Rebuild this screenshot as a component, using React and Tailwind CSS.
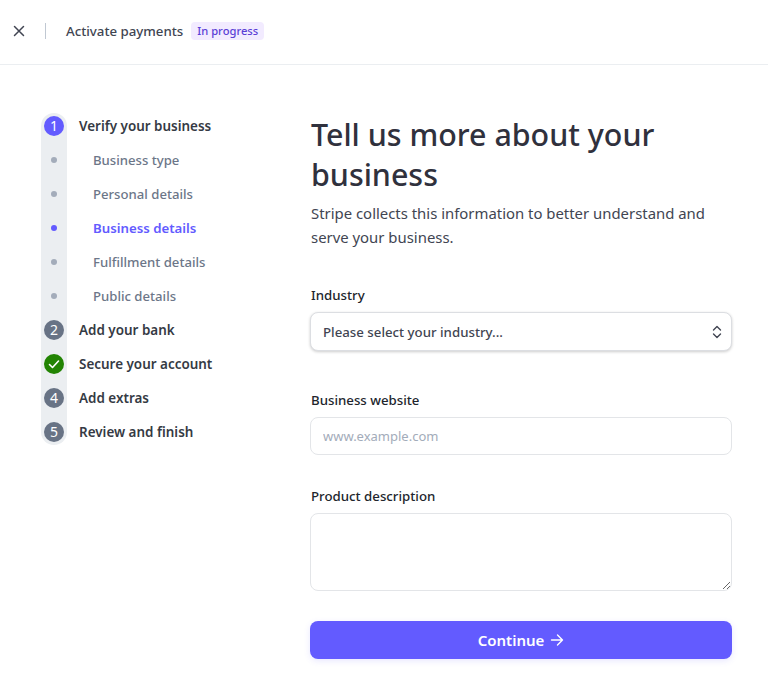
import React from "react";

const Num = ({ children, bg = "bg-[#687385]" }) => (
  <div className={`w-5 h-5 rounded-full ${bg} text-white flex items-center justify-center text-[14px] leading-none`}>{children}</div>
);
const Dot = ({ active }) => <div className={`w-[6px] h-[6px] rounded-full ${active ? "bg-[#635bff]" : "bg-[#a3acba]"}`} />;

const Cell = ({ children }) => <div className="h-[26px] flex items-center justify-center">{children}</div>;

const Check = () => (
  <div className="w-5 h-5 rounded-full bg-[#228403] flex items-center justify-center">
    <svg width="12" height="12" viewBox="0 0 12 12" fill="none" stroke="white" strokeWidth="1.6" strokeLinecap="round" strokeLinejoin="round"><path d="M1.5 6.5 4.5 9.5 10.5 3" /></svg>
  </div>
);

const steps = [
  ["Verify your business", "main"],
  ["Business type", "sub"],
  ["Personal details", "sub"],
  ["Business details", "active"],
  ["Fulfillment details", "sub"],
  ["Public details", "sub"],
  ["Add your bank", "main"],
  ["Secure your account", "main"],
  ["Add extras", "main"],
  ["Review and finish", "main"],
];

const labelClass = {
  main: "text-[#353a44] font-semibold text-[13.45px]",
  sub: "text-[#6c7688] font-medium text-[13.15px] pl-[14px] pt-[2px]",
  active: "text-[#635bff] font-semibold text-[13.25px] pl-[14px] pt-[2px]",
};

const Label = ({ children }) => <div className="text-[13.25px] leading-5 font-medium text-[#21252c]">{children}</div>;

export default function App() {
  return (
    <div className="min-h-[694px] bg-white font-['Noto_Sans','Open_Sans',sans-serif]">
      <header className="h-[65px] border-b border-[#ebeef1] flex items-center pl-[13px] pb-[2px]">
        <svg width="12" height="12" viewBox="0 0 12 12" fill="none" stroke="#414552" strokeWidth="1.5" strokeLinecap="round"><path d="M1.5 1.5 10.5 10.5M10.5 1.5 1.5 10.5" /></svg>
        <div className="w-px h-4 bg-[#c0c8d2] ml-[20px]" />
        <div className="ml-[20px] text-[13.25px] leading-5 font-medium text-[#414552]">Activate payments</div>
        <div className="ml-2 h-[18px] px-[6px] rounded-[4px] bg-[#f2ebff] text-[#5b3fd6] text-[11.2px] leading-[18px] font-medium">In progress</div>
      </header>
      <main className="flex pt-12 pl-[41px] pr-[36px]">
        <div className="w-[269px] shrink-0 flex gap-3">
          <div className="w-[26px] h-[332px] rounded-[13px] bg-[#ebeef1] flex flex-col gap-2">
            <Cell><Num bg="bg-[#635bff]">1</Num></Cell>
            <Cell><Dot /></Cell>
            <Cell><Dot /></Cell>
            <Cell><Dot active /></Cell>
            <Cell><Dot /></Cell>
            <Cell><Dot /></Cell>
            <Cell><Num>2</Num></Cell>
            <Cell><Check /></Cell>
            <Cell><Num>4</Num></Cell>
            <Cell><Num>5</Num></Cell>
          </div>
          <div className="flex flex-col gap-2">
            {steps.map(([t, k]) => (
              <div key={t} className={`h-[26px] flex items-center whitespace-nowrap ${labelClass[k]}`}>{t}</div>
            ))}
          </div>
        </div>
        <div className="flex-1 min-w-0 pt-[2px]">
          <h1 className="pl-px text-[30.4px] leading-10 font-medium text-[#30313d]">Tell us more about your business</h1>
          <p className="pl-px mt-[6px] text-[14.9px] leading-6 text-[#414552]">Stripe collects this information to better understand and serve your business.</p>
          <div className="mt-[36px] pl-px"><Label>Industry</Label></div>
          <div className="mt-[7px] h-[39px] rounded-[8px] bg-white border border-[#dcdee2] shadow-[0_1px_3px_rgba(0,0,0,0.2)] flex items-center justify-between pl-3 pr-[9px] text-[13.25px] font-medium text-[#414552]">
            <span className="pt-[2px]">Please select your industry...</span>
            <svg width="10" height="14" viewBox="0 0 10 14" fill="none" stroke="#414552" strokeWidth="1.4" strokeLinecap="round" strokeLinejoin="round"><path d="M1.5 5 5 1.5 8.5 5M1.5 9 5 12.5 8.5 9" /></svg>
          </div>
          <div className="mt-[39px] pl-px"><Label>Business website</Label></div>
          <input readOnly placeholder="www.example.com" className="mt-[7px] block w-full h-[38px] rounded-[8px] border border-[#e3e5e8] px-3 text-[13px] outline-none placeholder:text-[#a3acba]" />
          <div className="mt-[31px] pl-px"><Label>Product description</Label></div>
          <textarea readOnly className="mt-[7px] block w-full h-[78px] rounded-[8px] border border-[#e3e5e8] outline-none" />
          <button className="mt-[30px] w-full h-[38px] rounded-[8px] bg-[#635bff] shadow-[0_2px_6px_rgba(99,91,255,0.15)] text-white text-[15px] font-semibold flex items-center justify-center gap-[6px]">
            Continue
            <svg width="14" height="14" viewBox="0 0 14 14" fill="none" stroke="white" strokeWidth="1.4" strokeLinecap="round" strokeLinejoin="round"><path d="M1.5 7H12.5M7.5 2 12.5 7 7.5 12" /></svg>
          </button>
        </div>
      </main>
    </div>
  );
}
